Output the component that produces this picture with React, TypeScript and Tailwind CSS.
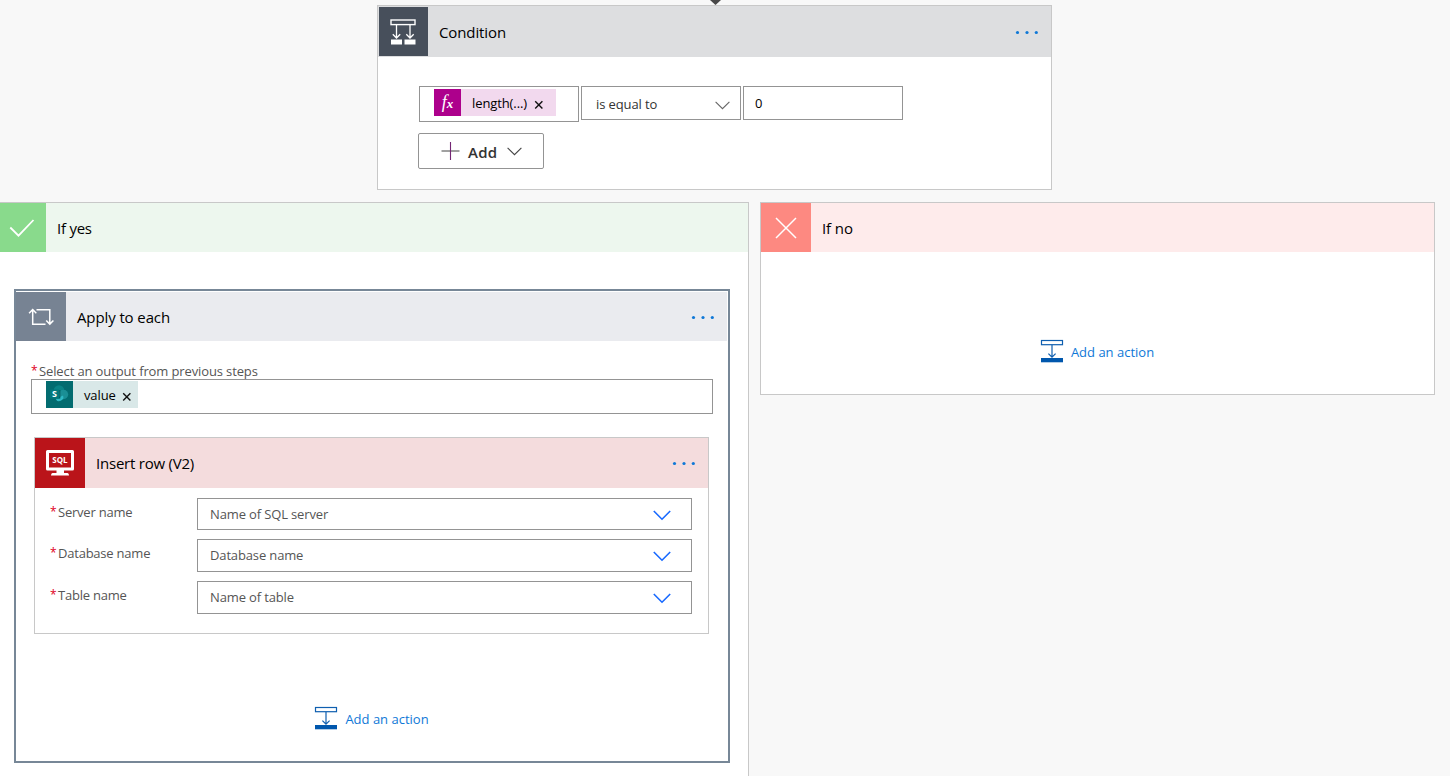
import type { ReactNode } from "react";

function Dots() {
  return (
    <svg width="24" height="5" viewBox="0 0 24 5" fill="#0f78d7">
      <circle cx="2.500" cy="2.500" r="1.600" />
      <circle cx="12" cy="2.500" r="1.600" />
      <circle cx="21.300" cy="2.500" r="1.600" />
    </svg>
  );
}

function ConditionIcon() {
  return (
    <svg width="26" height="26" viewBox="0 0 26 26" fill="none" stroke="#fff" className="mr-px">
      <rect x="1" y="1" width="24" height="4.600" strokeWidth="1.400" />
      <path d="M6.500 6v13M2.800 15.200l3.700 3.800 3.700-3.800M20 6v13M16.300 15.200l3.700 3.800 3.700-3.800" strokeWidth="1.300" />
      <path d="M1 20.500h11v5H1zM14.500 20.500h11v5h-11z" fill="#fff" stroke="none" />
    </svg>
  );
}

function LoopIcon() {
  return (
    <svg width="26" height="18" viewBox="0 0 26 18" fill="none" stroke="#fff" strokeWidth="1.500">
      <path d="M8.500 1.700h13.300v14.200M18.200 12.400l3.600 3.700 3.600-3.700" />
      <path d="M17.500 16.300H4.700V2M1.100 5.300l3.600-3.700 3.600 3.700" />
    </svg>
  );
}

function ActionIcon() {
  return (
    <svg width="24" height="24" viewBox="0 0 24 24" fill="none" stroke="#0f5fb0">
      <rect x="1.500" y="1.500" width="21" height="4.200" strokeWidth="1.200" />
      <path d="M12 6v12M8.400 14.600l3.600 3.600 3.600-3.600" strokeWidth="1.200" />
      <path d="M1 19h22v4.300H1z" fill="#0057ad" stroke="none" />
    </svg>
  );
}

function SqlIcon() {
  return (
    <svg width="28" height="26" viewBox="0 0 28 26" fill="#fff">
      <path fillRule="evenodd" d="M1.500 0h25A1.500 1.500 0 0 1 28 1.500v17.500a1.500 1.500 0 0 1-1.500 1.500H18v2.500h3.500q1.500 0 1.500 2.500H5q0-2.500 1.500-2.500H10.500V20.500h-9A1.500 1.500 0 0 1 0 19V1.500A1.500 1.500 0 0 1 1.500 0zM3 3v14.500h22V3z" />
      <text x="14" y="13" textAnchor="middle" fontSize="8" fontWeight="700" fontFamily="Open Sans">SQL</text>
    </svg>
  );
}

function SharePointIcon() {
  return (
    <svg width="20" height="20" viewBox="0 0 20 20" className="mr-px mb-px">
      <circle cx="10" cy="6.500" r="5.300" fill="#0a8386" />
      <circle cx="14.500" cy="10.500" r="4.700" fill="#1a8f95" />
      <path d="M6.500 14.500h4.500v-1.500l3-1.500a3.900 3.900 0 1 1-7.500 3z" fill="#2fb9c4" />
      <path d="M5 6h6.500v8.500H7z" fill="#02575a" opacity=".6" />
      <rect x="1" y="5.500" width="9" height="9" rx=".8" fill="#03787c" />
      <text x="5.500" y="13.200" textAnchor="middle" fontSize="9" fontWeight="700" fill="#fff" fontFamily="Open Sans">S</text>
    </svg>
  );
}

function Close() {
  return (
    <svg width="10" height="10" viewBox="0 0 10 10" stroke="#111" strokeWidth="1.400">
      <path d="M1.200 1.200l7.200 7.200M8.400 1.200l-7.200 7.200" />
    </svg>
  );
}

function Header({ icon, title, iconClass, barClass, menu }: {
  icon: ReactNode;
  title: ReactNode;
  iconClass: string;
  barClass: string;
  menu?: boolean;
}) {
  return (
    <div className={`flex items-center ${barClass}`}>
      <div className={`flex shrink-0 items-center justify-center self-stretch ${iconClass}`}>{icon}</div>
      <h2 className="ml-[11px] flex-1 text-[15px] leading-5 tracking-[-0.11px] text-black">{title}</h2>
      {menu && <button className="mr-3 flex pt-px"><Dots /></button>}
    </div>
  );
}

function AddAction() {
  return (
    <button className="mr-px flex items-center gap-[7px] text-[13px] leading-5 text-[#0f78d7]">
      <ActionIcon />
      <span className="pt-0.5">Add an action</span>
    </button>
  );
}

function Field({ label, value, className }: { label: string; value: string; className: string }) {
  return (
    <div className={`flex ${className}`}>
      <label className="flex w-[147px] pt-1 text-[13px] leading-5 text-[#555]">
        <span className="w-2 text-[12px] text-[#e0001b]">*</span>
        <span className="tracking-[-0.22px]">{label}</span>
      </label>
      <div className="flex flex-1 items-center justify-between border border-[#949494] pr-5 pl-3 text-[13px] text-[#555]">
        <span className="pt-px tracking-[-0.14px]">{value}</span>
        <svg width="18" height="11" viewBox="0 0 18 11" fill="none" stroke="#1769ff" strokeWidth="1.600" className="mt-0.5">
          <path d="M.8 1l8.200 8.200L17.200 1" />
        </svg>
      </div>
    </div>
  );
}

export default function App() {
  return (
    <main className="flex h-[776px] w-[1450px] flex-col overflow-hidden bg-[#f8f8f8] font-['Open_Sans',sans-serif]">
      <svg width="12" height="5" viewBox="0 0 12 5" className="ml-[709px] shrink-0">
        <path d="M1 0h11L6.500 5z" fill="#484848" />
      </svg>
      <section className="ml-[377px] h-[185px] w-[675px] shrink-0 border border-[#c8c8c8] bg-white">
        <Header
          icon={<ConditionIcon />}
          title="Condition"
          iconClass="w-[50px] border-t border-l border-[#dddee0] bg-[#474f5b] mb-px"
          barClass="h-[51px] bg-[#dddee0]"
          menu
        />
        <div className="ml-10 pt-[29px]">
          <div className="ml-px flex items-start gap-0.5 text-[13px] leading-5">
            <div className="h-9 w-40 border border-[#949494] pt-0.5 pl-3.5">
              <div className="flex h-[27px] w-[122px] items-center bg-[#f2d9ee]">
                <span className="flex h-full w-[27px] items-center justify-center bg-[#ad008c] pb-0.5 font-['Liberation_Serif',serif] text-[18px] italic text-white">
                  <span>f</span><span className="pt-1 text-[13px] font-bold">x</span>
                </span>
                <span className="mr-[7px] ml-[11px] tracking-[-0.1px] text-black">length(...)</span>
                <span className="pt-1"><Close /></span>
              </div>
            </div>
            <div className="flex h-[34px] w-40 items-center justify-between border border-[#949494] pr-2.5 pl-3.5 text-[#333]">
              <span className="pt-0.5 tracking-[-0.1px]">is equal to</span>
              <svg width="15" height="9" viewBox="0 0 15 9" fill="none" stroke="#666" strokeWidth="1.100" className="mt-1">
                <path d="M.6.8l6.900 6.900L14.400.8" />
              </svg>
            </div>
            <div className="flex h-[34px] w-40 items-center border border-[#949494] pl-[11px] text-black">0</div>
          </div>
          <button className="mt-[11px] flex h-9 w-[126px] items-center rounded-xs border border-[#949494] pl-[22px] text-[15px] font-semibold text-[#333]">
            <svg width="20" height="20" viewBox="0 0 20 20" fill="none" strokeWidth="1.100">
              <path d="M.5 10h18" stroke="#555" />
              <path d="M9.500 1v18" stroke="#742774" />
            </svg>
            <span className="ml-[7px] pt-0.5 tracking-[0.3px]">Add</span>
            <svg width="15" height="9" viewBox="0 0 15 9" fill="none" stroke="#444" strokeWidth="1.100" className="ml-[9px]">
              <path d="M.6.8l6.900 6.900L14.400.8" />
            </svg>
          </button>
        </div>
      </section>

      <div className="mt-3 flex items-start">
        <section className="h-[574px] w-[749px] shrink-0 border-t border-r border-[#c8c8c8] bg-white">
          <Header
            icon={
              <svg width="26" height="18" viewBox="0 0 26 18" fill="none" stroke="#fff" strokeWidth="1.800" className="mr-0.5">
                <path d="M1.300 8.500l8.200 8.200L24.500 1" />
              </svg>
            }
            title={<span className="tracking-[-0.25px]">If yes</span>}
            iconClass="w-[46px] bg-[#89da8c]"
            barClass="h-[49px] bg-[#edf7ee]"
          />
          <div className="mt-[37px] ml-3.5 h-[474px] w-[716px] border-2 border-[#778797] bg-white pt-px">
            <Header
              icon={<LoopIcon />}
              title="Apply to each"
              iconClass="w-[50px] bg-[#778393]"
              barClass="mr-px h-[49px] bg-[#eaebef]"
              menu
            />
            <div className="mt-5 ml-[15px] flex text-[13px] leading-[18px] text-[#555]">
              <span className="w-2 pt-px text-[12px] text-[#e0001b]">*</span>
              <span className="pt-px tracking-[-0.12px]">Select an output from previous steps</span>
            </div>
            <div className="-mt-px ml-[15px] h-[35px] w-[682px] border border-[#949494] pt-px pl-3.5">
              <div className="flex h-[27px] w-[92px] items-center bg-[#d9e8e8] text-[13px]">
                <span className="flex h-full w-[27px] items-center justify-center bg-[#036c70]"><SharePointIcon /></span>
                <span className="ml-[11px] pt-0.5 tracking-[-0.12px] text-black">value</span>
                <span className="ml-1.5 pt-1"><Close /></span>
              </div>
            </div>
            <div className="mt-[23px] ml-[18px] h-[197px] w-[675px] border border-[#c8c8c8] bg-white">
              <Header
                icon={<SqlIcon />}
                title={<span className="tracking-[-0.22px]">Insert row (V2)</span>}
                iconClass="w-[50px] bg-[#ba141a]"
                barClass="h-[50px] bg-[#f4dcdd]"
                menu
              />
              <div className="mt-2.5 mr-4 ml-[15px]">
                <Field label="Server name" value="Name of SQL server" className="h-8" />
                <Field label="Database name" value="Database name" className="mt-[9px] h-[33px]" />
                <Field label="Table name" value="Name of table" className="mt-[9px] h-[33px]" />
              </div>
            </div>
            <div className="mt-[72px] flex justify-center"><AddAction /></div>
          </div>
        </section>
        <section className="ml-[11px] h-[193px] w-[675px] shrink-0 border border-[#c8c8c8] bg-white">
          <Header
            icon={
              <svg width="22" height="22" viewBox="0 0 22 22" fill="none" stroke="#fff" strokeWidth="1.500">
                <path d="M1 1l20 20M21 1L1 21" />
              </svg>
            }
            title="If no"
            iconClass="w-[50px] bg-[#fd8981]"
            barClass="h-[49px] bg-[#feebeb]"
          />
          <div className="mt-[87px] flex justify-center"><AddAction /></div>
        </section>
      </div>
    </main>
  );
}
